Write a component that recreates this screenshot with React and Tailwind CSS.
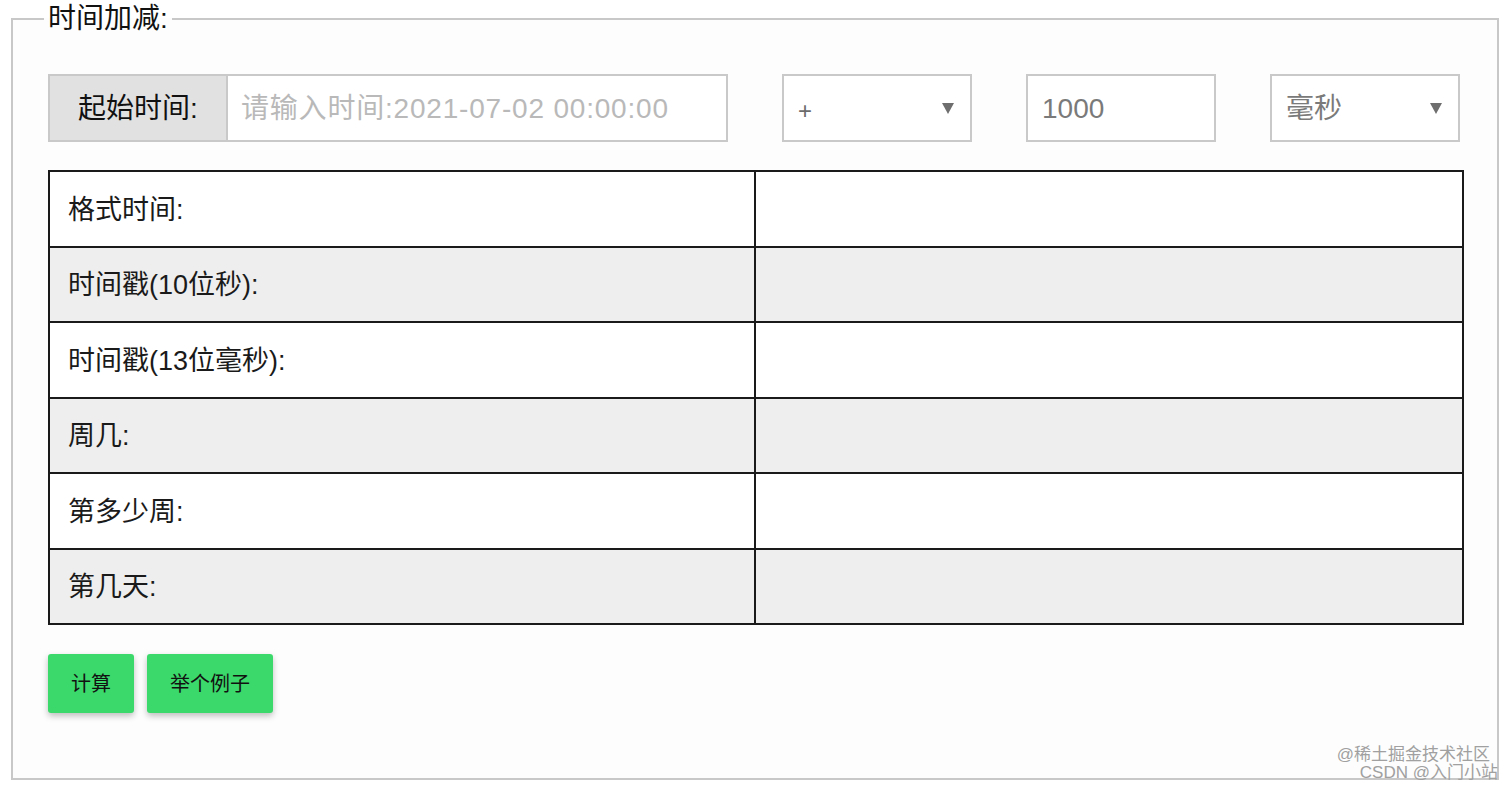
import React from 'react';

const ROWS = ['格式时间:', '时间戳(10位秒):', '时间戳(13位毫秒):', '周几:', '第多少周:', '第几天:'];

function Arrow() {
  return <span className="w-0 h-0 border-l-[6px] border-r-[6px] border-t-[11px] border-l-transparent border-r-transparent border-t-[#6e6e6e]" />;
}

function FakeSelect({ value, small }) {
  return (
    <div className="w-[190px] h-[68px] border-2 border-[#c9c9c9] bg-white flex items-center justify-between pl-[14px] pr-[16px]">
      <span className={small ? 'text-[24px] text-[#6b6b6b] mt-[6px]' : 'text-[28px] text-[#7a7a7a] mt-[2px]'}>{value}</span>
      <Arrow />
    </div>
  );
}

export default function App() {
  return (
    <div className="relative min-h-[792px] bg-white text-[#111]" style={{ fontFamily: '"Liberation Sans", "Noto Sans CJK SC", sans-serif' }}>
      <div className="pt-[4px] pl-[11px] pr-[13px]">
        <fieldset className="border-2 border-[#c8c8c8] pl-[35px] pr-[33px] pb-[65px] bg-[#fdfdfd]">
          <legend className="text-[28px] leading-[30px] px-[4px] -ml-[4px]">时间加减:</legend>

          <div className="flex gap-[54px] mt-[40px]">
            <div className="flex w-[680px] h-[68px] border-2 border-[#c9c9c9]">
              <div className="w-[178px] bg-[#e1e1e1] border-r-2 border-[#c9c9c9] flex items-center justify-center text-[28px] pt-[2px]">
                起始时间:
              </div>
              <input
                className="flex-1 min-w-0 bg-white px-[13px] pt-[2px] text-[28px] tracking-[0.8px] outline-none placeholder:text-[#b9b9b9]"
                placeholder="请输入时间:2021-07-02 00:00:00"
              />
            </div>
            <FakeSelect value="+" small />
            <div className="w-[190px] h-[68px] border-2 border-[#c9c9c9] bg-white flex items-center px-[14px] pt-[2px] text-[28px] text-[#7a7a7a]">
              1000
            </div>
            <FakeSelect value="毫秒" />
          </div>

          <table className="w-full mt-[28px] border-collapse border-2 border-[#1a1a1a] text-[27px] text-[#1a1a1a]">
            <tbody>
              {ROWS.map((label, i) => (
                <tr key={label} className={i % 2 === 1 ? 'bg-[#eeeeee]' : 'bg-white'}>
                  <td className="w-[706px] h-[75.5px] border-2 border-[#1a1a1a] pl-[18px] pt-[2px]">{label}</td>
                  <td className="h-[75.5px] border-2 border-[#1a1a1a]"></td>
                </tr>
              ))}
            </tbody>
          </table>

          <div className="flex gap-[13px] mt-[29px]">
            <button className="h-[59px] px-[23px] bg-[#3bd96b] rounded-[3px] text-[20px] text-[#111] shadow-[0_3px_6px_rgba(0,0,0,0.25)]">计算</button>
            <button className="h-[59px] px-[23px] bg-[#3bd96b] rounded-[3px] text-[20px] text-[#111] shadow-[0_3px_6px_rgba(0,0,0,0.25)]">举个例子</button>
          </div>
        </fieldset>
      </div>

      <div className="absolute right-[14px] top-[746px] text-right text-[17px] leading-[18px] text-[#a0a0a0]">
        <div className="pr-[8px]">@稀土掘金技术社区</div>
        <div>CSDN @入门小站</div>
      </div>
    </div>
  );
}
